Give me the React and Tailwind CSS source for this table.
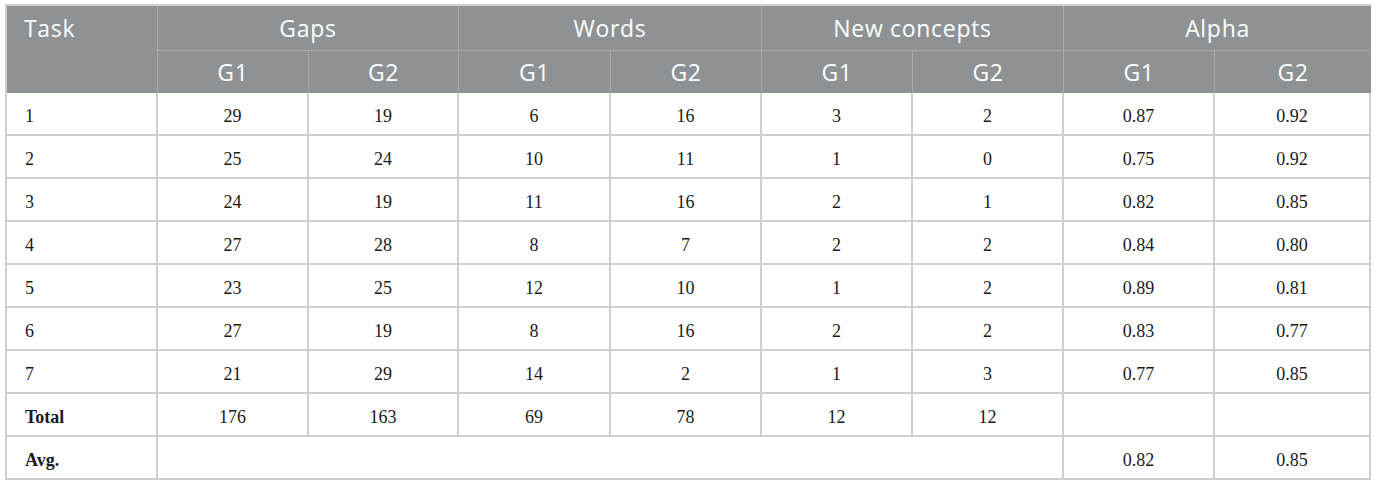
import React from 'react';

const rows = [
  ['1', '29', '19', '6', '16', '3', '2', '0.87', '0.92'],
  ['2', '25', '24', '10', '11', '1', '0', '0.75', '0.92'],
  ['3', '24', '19', '11', '16', '2', '1', '0.82', '0.85'],
  ['4', '27', '28', '8', '7', '2', '2', '0.84', '0.80'],
  ['5', '23', '25', '12', '10', '1', '2', '0.89', '0.81'],
  ['6', '27', '19', '8', '16', '2', '2', '0.83', '0.77'],
  ['7', '21', '29', '14', '2', '1', '3', '0.77', '0.85'],
];

const widths = [151, 151, 150, 152, 151, 151, 151, 151, 156];
const groups = ['Gaps', 'Words', 'New concepts', 'Alpha'];

const head = "font-['Open_Sans',sans-serif] text-[23px] tracking-[0.03em] font-normal text-white";
const body = "font-['Liberation_Serif',serif] text-[18px] text-[#1a1a1a] border-r-2 border-b-2 border-[#cfcfcf] h-[43px] p-0";

export default function App() {
  return (
    <div className="w-[1376px] h-[485px] bg-white pt-[4px] pl-[5px]">
      <table className="table-fixed border-separate border-spacing-0 border-l-2 border-t-2 border-[#cfcfcf] w-[1364px]">
        <colgroup>
          {widths.map((w, i) => (
            <col key={i} style={{ width: w }} />
          ))}
        </colgroup>
        <thead className="bg-[#8e9294]">
          <tr>
            <th
              rowSpan={2}
              className={`${head} text-left align-top pl-[17px] pt-[5px] border-r border-[#a7abad]`}
            >
              Task
            </th>
            {groups.map((g, i) => (
              <th
                key={g}
                colSpan={2}
                className={`${head} text-center h-[45px] p-0 border-b border-[#a7abad] ${
                  i < groups.length - 1 ? 'border-r' : ''
                }`}
              >
                {g}
              </th>
            ))}
          </tr>
          <tr>
            {Array.from({ length: 8 }).map((_, i) => (
              <th
                key={i}
                className={`${head} text-center h-[42px] p-0 ${i < 7 ? 'border-r border-[#a7abad]' : ''}`}
              >
                {i % 2 === 0 ? 'G1' : 'G2'}
              </th>
            ))}
          </tr>
        </thead>
        <tbody>
          {rows.map((r) => (
            <tr key={r[0]}>
              {r.map((c, i) => (
                <td key={i} className={`${body} ${i === 0 ? 'text-left pl-[18px] pt-[5px]' : 'text-center pt-[5px]'}`}>
                  {c}
                </td>
              ))}
            </tr>
          ))}
          <tr>
            <td className={`${body} text-left pl-[18px] pt-[5px] font-bold`}>Total</td>
            {['176', '163', '69', '78', '12', '12', '', ''].map((c, i) => (
              <td key={i} className={`${body} text-center pt-[5px]`}>
                {c}
              </td>
            ))}
          </tr>
          <tr>
            <td className={`${body} text-left pl-[18px] pt-[5px] font-bold`}>Avg.</td>
            <td colSpan={6} className={body}></td>
            <td className={`${body} text-center pt-[5px]`}>0.82</td>
            <td className={`${body} text-center pt-[5px]`}>0.85</td>
          </tr>
        </tbody>
      </table>
    </div>
  );
}
